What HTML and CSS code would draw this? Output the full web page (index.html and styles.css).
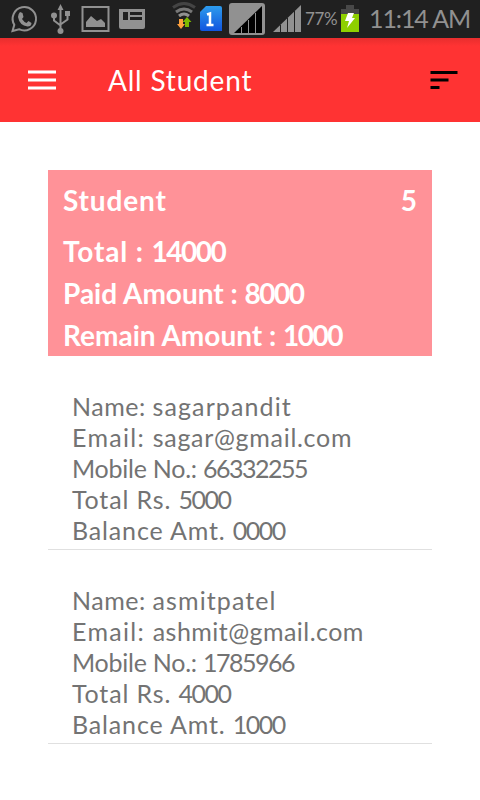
FILE: index.html
```
<!DOCTYPE html>
<html>
<head>
    <meta charset="utf-8">
    <meta name="viewport" content="width=device-width,initial-scale=1.0">
    <title>All Student</title>
    <link rel="stylesheet" href="styles.css">
</head>
<body>

    <!-- status bar -->
    <div class="status">
        <svg class="status-icons" width="304" height="38" viewBox="0 0 304 38">
            <g fill="none" stroke="#919191" stroke-width="2">
                <path d="M12.500 31l1.800-6.200A11.700 11.700 0 1 1 19 29.200z"/>
                <path d="M82.500 7h26v24h-26z"/>
            </g>
            <path fill="#919191" d="M20 12l2.500 1 1 4-1.500 2q2 3 4.500 4l2-2 3 2q0 3.500-4 3.500-8-1-9.500-9.500 0-3 2-5z"/>
            <!-- usb -->
            <g fill="none" stroke="#919191" stroke-width="2">
                <path d="M60.500 8v24M54 15v5.500l6.500 5M67.500 15v4.500l-7 5"/>
            </g>
            <g fill="#919191">
                <path d="M60.500 4l3 6h-6zM65 11h5v5h-5z"/>
                <circle cx="54" cy="15.500" r="3"/><circle cx="60.500" cy="31" r="3"/>
                <path d="M86 27v-5l5-6 6 5 4-2 4 4v4z"/>
                <path fill-rule="evenodd" d="M119 9h26v18q0 2-2 2h-22q-2 0-2-2zM123 12v8h5v-8zM130 12v3h12v-3zM130 17v3h12v-3z"/>
            </g>
            <!-- wifi -->
            <g fill="none" stroke-width="3">
                <path stroke="#444" d="M173 7.500q11-8 22 0"/>
                <path stroke="#777" d="M176 12q8-6 16 0"/>
                <path stroke="#919191" d="M179 16q5-4 10 0"/>
            </g>
            <path fill="#ffa13d" d="M179 19h4v5h2l-4 5-4-5h2z"/>
            <path fill="#7db900" d="M185 27h4v-5h2.500l-4.500-5-4.500 5h2.500z"/>
            <!-- sim -->
            <linearGradient id="sim" x2="0" y2="1"><stop stop-color="#2d9bec"/><stop offset="1" stop-color="#1155df"/></linearGradient>
            <path fill="url(#sim)" d="M206 6h14q2 0 2 2v23h-20q-2 0-2-2V12z"/>
            <path fill="none" stroke="#fff" stroke-width="2.500" d="M207 14.500l3-1V25M206.500 25h7"/>
            <!-- signal -->
            <rect x="229" y="3" width="36" height="32" rx="3" fill="#919191"/>
            <path d="M234 33L262 6v27z"/>
            <path stroke="#919191" d="M241.500 27v6M248.500 20v13M255.500 13v20"/>
            <path fill="#919191" d="M273 32L301 5v27z"/>
            <path stroke="#202020" d="M280.500 25v7M287.500 18v14M294.500 11v21"/>
        </svg>
        <span class="percent">77%</span>
        <svg class="battery" width="18" height="28" viewBox="0 0 18 28">
            <path fill="#484848" d="M5 0h8v4h5v5H0V4h5z"/>
            <path fill="#8ed000" d="M0 9h18v18H0z"/>
            <path fill="#fff" d="M7 8h6l-2 5h3L6 23l2-7H4z"/>
        </svg>
        <span class="clock">11:14 AM</span>
    </div>

    <!-- app bar -->
    <div class="bar">
        <svg class="menu" width="28" height="22" viewBox="0 0 28 22">
            <path stroke="#ff9c9c" stroke-width="4" d="M0 3h28M0 11h28M0 19h28"/>
            <path stroke="#fff" stroke-width="2" d="M0 3h28M0 11h28M0 19h28"/>
        </svg>
        <h1 class="title">All Student</h1>
        <svg class="sort" width="28" height="18" viewBox="0 0 28 18">
            <path stroke="#000" stroke-width="3" d="M.5 1.500h27M.5 9h18M.5 16.500h9"/>
        </svg>
    </div>

    <div class="content">
        <div class="card">
            <div class="head wide"><span>Student</span><span class="count">5</span></div>
            <p><span class="wide">Total : </span><span class="num">14000</span></p>
            <p>Paid Amount : <span class="num">8000</span></p>
            <p>Remain Amount : <span class="num">1000</span></p>
        </div>

        <div class="item">
            <p><span class="name">Name: </span><span class="user">sagarpandit</span></p>
            <p><span class="email">Email: </span><span class="mail">sagar@gmail.com</span></p>
            <p><span class="mobile">Mobile No.: </span><span class="num">66332255</span></p>
            <p><span class="wide">Total Rs. </span><span class="num">5000</span></p>
            <p><span class="wide">Balance Amt. </span><span class="num">0000</span></p>
        </div>

        <div class="item">
            <p><span class="name">Name: </span><span class="user">asmitpatel</span></p>
            <p><span class="email">Email: </span><span class="mail long">ashmit@gmail.com</span></p>
            <p><span class="mobile">Mobile No.: </span><span class="num">1785966</span></p>
            <p><span class="wide">Total Rs. </span><span class="num">4000</span></p>
            <p><span class="wide">Balance Amt. </span><span class="num">1000</span></p>
        </div>
    </div>

</body>
</html>
```
FILE: styles.css
```
*{box-sizing:border-box;  margin:0;  padding:0;  }
body{width:480px;  height:800px;  overflow:hidden;  background:#fff;  font-family:Lato,'Open Sans',sans-serif;  }
svg{display:block;  flex:none;  }
p{white-space:nowrap;  }

.status{display:flex;  height:38px;  background:#202020;  color:#919191;  line-height:38px;  }
.percent{width:37px;  padding-left:1px;  font-size:17px;  letter-spacing:-0.4px;  }
.battery{margin-top:5px;  }
.clock{padding-left:10px;  font-size:25px;  line-height:36px;  letter-spacing:-1.1px;  white-space:nowrap;  }

.bar{display:flex;  align-items:center;  height:84px;  padding:0 22px 0 28px;  background:linear-gradient(#e82e2e,#ff3333 8px);  color:#fff;  }
.title{flex:1;  padding-left:52px;  font-size:28px;  line-height:84px;  font-weight:400;  letter-spacing:0.8px;  }

.wide{letter-spacing:0.85px;  }
.num{letter-spacing:-1.5px;  }

.content{padding:48px 48px 0;  }
.card{height:186px;  padding:9px 15px 0;  background:#ff9298;  color:#fff;  font-size:28px;  font-weight:700;  line-height:42px;  }
.head{display:flex;  justify-content:space-between;  margin-bottom:9px;  }
.count{letter-spacing:0;  }

.item{height:194px;  padding:35px 24px 0;  border-bottom:1px solid #e0e0e0;  color:#737373;  font-size:25px;  line-height:31px;  }
.name{letter-spacing:0.5px;  }
.email{letter-spacing:1.3px;  }
.mobile{letter-spacing:-0.25px;  }
.user{letter-spacing:1.1px;  }
.mail{letter-spacing:0.7px;  }
.long{letter-spacing:0.45px;  }
```
